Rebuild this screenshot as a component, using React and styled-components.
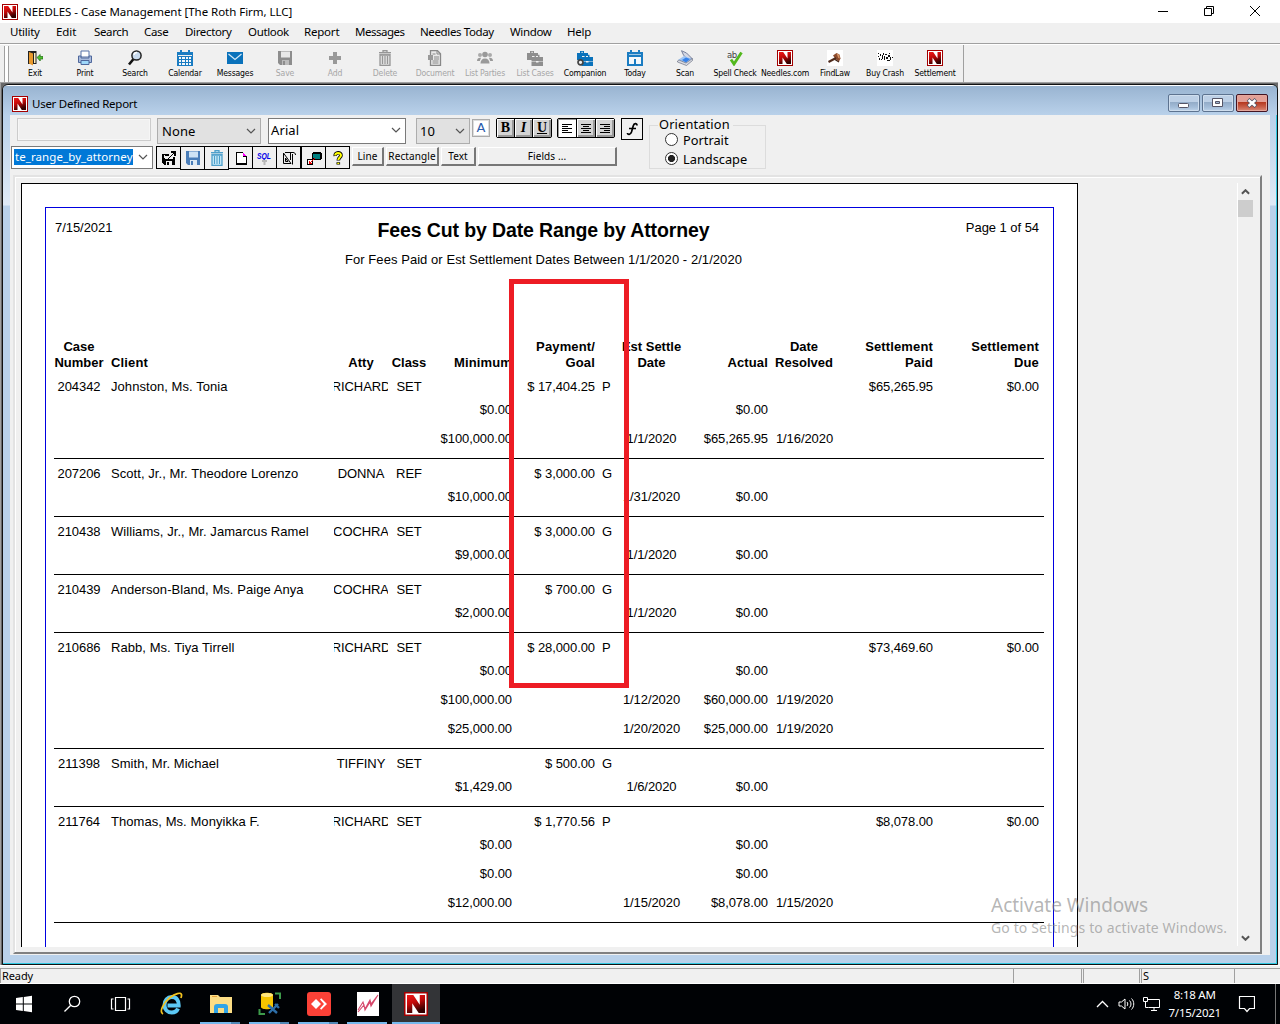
import React from "react";
import styled, { createGlobalStyle, css } from "styled-components";

const GlobalStyle = createGlobalStyle`
  * { box-sizing: border-box; }
  html, body { margin: 0; padding: 0; overflow: hidden; }
  body { font-family: "Noto Sans", "Open Sans", sans-serif; font-size: 11.5px; color: #000; }
  svg { display: block; flex: none; }
`;

const Desktop = styled.div`
  position: relative;
  width: 1280px;
  height: 1024px;
  display: flex;
  flex-direction: column;
  background: #f0f0f0;
  white-space: nowrap;
  overflow: hidden;
`;

/* ---------- application chrome ---------- */
const TitleBar = styled.header`
  height: 23px;
  flex: none;
  display: flex;
  align-items: center;
  padding-left: 2px;
  background: #fff;
  gap: 5px;
`;
const TitleText = styled.span`
  font-size: 11.5px;
  letter-spacing: ${(p) => p.$ls || "-0.04px"};
  line-height: 16px;
  flex: 1;
`;
const CaptionButtons = styled.div`
  display: flex;
  align-items: center;
  height: 20px;
  margin: -2px 2px 0 0;
`;
const CaptionButton = styled.div`
  width: 46px;
  display: flex;
  justify-content: center;
`;
const MenuBar = styled.nav`
  height: 21px;
  flex: none;
  display: flex;
  padding: 1px 0 0 10px;
  line-height: 16px;
  border-bottom: 1px solid #a0a0a0;
`;
const MenuItem = styled.span`
  width: ${(p) => p.$w}px;
  letter-spacing: ${(p) => p.$ls || -0.35}px;
`;
const Toolbar = styled.div`
  height: 38px;
  flex: none;
  display: flex;
  border-top: 1px solid #fff;
`;
const Grip = styled.div`
  width: 5px;
  height: 36px;
  margin: 1px 1px 0 4px;
  border: solid #a0a0a0;
  border-width: 0 1px;
  background: #fff;
`;
const ToolButtons = styled.div`
  display: flex;
  width: 954px;
  border-right: 1px solid #a0a0a0;
`;
const ToolButton = styled.div`
  width: 50px;
  flex: none;
  display: flex;
  flex-direction: column;
  align-items: center;
  padding-top: 5px;
  gap: 1px;
  color: ${(p) => (p.$off ? "#a6a6a6" : "#000")};
`;
const ToolLabel = styled.span`
  font: 8.6px/12px "DejaVu Sans Condensed", "DejaVu Sans", sans-serif;
  font-stretch: condensed;
  letter-spacing: -0.18px;
`;

/* ---------- child window ---------- */
const Workspace = styled.main`
  height: 883px;
  flex: none;
  padding: 0 0 1px 1px;
  margin-right: 2px;
  border-top: 1px solid #a0a0a0;
  background: #696969;
  border-left: 1px solid #a0a0a0;
`;
const Child = styled.section`
  height: 881px;
  margin-top: 1px;
  border: 1px solid #111;
  border-radius: 6px 6px 0 0;
  display: flex;
  flex-direction: column;
  overflow: hidden;
  background: #b9d1ea;
  box-shadow: inset -1px -1px 0 #2fc9e2, inset 0 1px 0 #fff, inset 1px 0 0 #e8f1fa;
`;
const ChildTitle = styled.div`
  height: 29px;
  flex: none;
  margin-top: 1px;
  display: flex;
  align-items: center;
  gap: 4px;
  padding: 6px 9px 0 9px;
  background: linear-gradient(#99b4d1, #b9d1ea);
`;
const ChildButtons = styled.div`
  display: flex;
  gap: 2px;
  height: 20px;
`;
const ChildButton = styled.div`
  width: 32px;
  height: 18px;
  border: 1px solid ${(p) => (p.$close ? "#431422" : "#5d7390")};
  border-radius: 2px;
  box-shadow: inset 0 0 0 1px ${(p) => (p.$close ? "#e5a79c" : "#cfdeee")};
  background: ${(p) =>
    p.$close
      ? "linear-gradient(#e3a097 0 45%, #b5381f 46%, #c9604a 75%, #d98b78)"
      : "linear-gradient(#bdd0e6 0 45%, #93acc8 46%, #a3bcd8 75%, #bdd3ea)"};
  display: flex;
  align-items: center;
  justify-content: center;
`;
const ChildBody = styled.div`
  height: 849px;
  flex: none;
  padding: 0 7px 9px 7px;
  background: linear-gradient(#b9d1ea 0, #dfeaf6 90px, #b9d1ea 91px);
  box-shadow: inset -1px -1px 0 #2fc9e2;
`;
const Form = styled.div`
  height: 840px;
  width: 1260px;
  background: #f0f0f0;
  display: flex;
  flex-direction: column;
`;

/* ---------- form toolbar ---------- */
const FormBar = styled.div`
  height: 60px;
  flex: none;
  display: flex;
`;
const FormRows = styled.div`
  width: 639px;
  flex: none;
`;
const FormRow = styled.div`
  height: ${(p) => p.$h}px;
  display: flex;
  align-items: flex-start;
  padding: ${(p) => p.$pad};
`;
const DisabledInput = styled.div`
  width: 134px;
  height: 23px;
  margin-right: 6px;
  border: 1px solid #ccc;
  box-shadow: inset 0 0 0 1px #f6f6f6;
`;
const Combo = styled.div`
  width: ${(p) => p.$w}px;
  height: ${(p) => p.$h || 26}px;
  margin-right: ${(p) => p.$mr || 0}px;
  display: flex;
  align-items: center;
  justify-content: space-between;
  padding: 0 4px ${(p) => (p.$gray ? 0 : 2)}px ${(p) => p.$pl || 4}px;
  font-size: 13px;
  letter-spacing: 0.1px;
  border: 1px solid ${(p) => (p.$gray ? "#adadad" : "#7a7a7a")};
  background: ${(p) => (p.$gray ? "#e1e1e1" : "#fff")};
`;
const Selection = styled.span`
  width: 119px;
  height: 16px;
  line-height: 15px;
  padding-left: 1px;
  overflow: hidden;
  font-size: 11.5px;
  letter-spacing: 0.08px;
  color: #fff;
  background: #0078d7;
`;
const FontColor = styled.div`
  width: 18px;
  height: 18px;
  margin: 1px 6px 0 0;
  border: 1px solid #aaa;
  background: #fff;
  box-shadow: inset 0 0 0 1px #ddd;
  color: #2a5cad;
  font: 13px/16px "DejaVu Sans", sans-serif;
  text-align: center;
`;
const ButtonGroup = styled.div`
  display: flex;
  height: 20px;
  margin-right: ${(p) => p.$mr}px;
  border: 1px solid #000;
  border-radius: 2px;
  background: #000;
  gap: 1px;
`;
const StyleButton = styled.div`
  width: ${(p) => p.$w}px;
  height: 18px;
  display: flex;
  align-items: center;
  justify-content: center;
  background: ${(p) => (p.$on ? "#fff" : "#d4d4d4")};
  box-shadow: ${(p) => (p.$on ? "inset 1px 1px 0 #999" : "inset 1px 1px 0 #fff, inset -2px -2px 0 #999")};
  font: bold 14px/16px "Liberation Serif", serif;
  ${(p) => p.$italic && css`font-style: italic;`}
  ${(p) => p.$under && css`text-decoration: underline;`}
`;
const FunctionButton = styled.div`
  width: 22px;
  height: 22px;
  border: 1px solid #000;
  display: flex;
  align-items: center;
  justify-content: center;
`;
const IconStrip = styled.div`
  display: flex;
  margin-right: 3px;
`;
const IconButton = styled.div`
  width: 25px;
  height: ${(p) => (p.$tall ? 24 : 23)}px;
  margin-right: ${(p) => (p.$gap ? 0 : -1)}px;
  border: 1px solid #000;
  display: flex;
  align-items: center;
  justify-content: center;
  background: #f0f0f0;
`;
const PushButton = styled.div`
  width: ${(p) => p.$w}px;
  height: 19px;
  margin: 1px 2px 0 0;
  font-size: 10px;
  line-height: 16px;
  text-align: center;
  border: 1px solid #fff;
  border-right: 2px solid #777;
  border-bottom: 2px solid #777;
  letter-spacing: 0.1px;
`;
const Orientation = styled.fieldset`
  width: 117px;
  height: 52px;
  margin: 2px 0 0;
  padding: 0 0 0 15px;
  min-width: 0;
  border: 1px solid #dcdcdc;
  font-size: 12.8px;
`;
const Legend = styled.legend`
  margin-left: -7px;
  padding: 0 3px 0 1px;
  line-height: 15px;
  height: 16px;
  letter-spacing: 0.15px;
`;
const RadioRow = styled.div`
  display: flex;
  align-items: center;
  height: 19px;
  gap: 5px;
  &:first-of-type { margin-top: -3px; }
`;
const Radio = styled.div`
  width: 13px;
  height: 13px;
  border: 1px solid #333;
  border-radius: 50%;
  background: ${(p) => (p.$on ? "radial-gradient(circle, #222 0 3.2px, #fff 3.9px)" : "#fff")};
`;

/* ---------- preview pane ---------- */
const Preview = styled.div`
  width: 1249px;
  height: 779px;
  margin-left: 3px;
  display: flex;
  justify-content: space-between;
  padding: 6px 7px 6px 6px;
  border: 2px solid;
  border-color: #e3e3e3 #808080 #808080 #e3e3e3;
  box-shadow: inset 1px 1px 0 #fff;
`;
const Page = styled.div`
  width: 1057px;
  height: 764px;
  padding: 23px 23px 0;
  border: 1px solid #000;
  border-bottom: 0;
  background: #fff;
`;
const Report = styled.article`
  width: 1009px;
  height: 740px;
  border: 1px solid #0000e0;
  border-bottom: 0;
  padding: 0 9px 0 8px;
  font: 13px/16px "Liberation Sans", Arial, sans-serif;
`;
const ReportTop = styled.div`
  height: 131px;
  display: grid;
  grid-template-columns: 150px 1fr 157px;
  padding: 11px 5px 0 1px;
`;
const ReportDate = styled.div`
  padding-top: 1px;
  letter-spacing: -0.05px;
`;
const PageNo = styled.div`
  padding-top: 1px;
  text-align: right;
  letter-spacing: -0.05px;
`;
const Heading = styled.div`
  display: flex;
  flex-direction: column;
  align-items: center;
`;
const ReportTitle = styled.h1`
  margin: 0;
  font: bold 19.5px/22px "Liberation Sans", Arial, sans-serif;
  letter-spacing: -0.13px;
`;
const Subtitle = styled.div`
  margin-top: 11px;
  letter-spacing: 0.06px;
`;
const Columns = styled.div`
  display: grid;
  grid-template-columns: 50px 230px 54px 42px 82px 83px 28px 57px 88px 72px 93px 106px;
`;
const HeaderRow = styled(Columns)`
  height: 33px;
  padding-bottom: 1px;
  align-items: end;
  font-weight: bold;
`;
const Cell = styled.div`
  text-align: ${(p) => p.$align || "right"};
  padding-left: ${(p) => p.$pl || 0}px;
  white-space: pre;
  letter-spacing: ${(p) => (p.$align === "left" ? 0.06 : -0.08)}px;
`;
const CenterCell = styled(Cell)`
  display: flex;
  justify-content: center;
  overflow: ${(p) => (p.$clip ? "hidden" : "visible")};
  text-align: center;
`;
const HeadCell = styled(CenterCell)`
  justify-content: ${(p) => p.$pos};
  text-align: ${(p) => (p.$pos === "flex-end" ? "right" : p.$pos === "center" ? "center" : "left")};
  letter-spacing: ${(p) => (p.$pos === "center" ? 0 : 0.14)}px;
`;
const Record = styled.div`
  width: 990px;
  padding: 3px 0 2px;
  border-bottom: 1px solid #000;
`;
const RecordLine = styled(Columns)`
  height: ${(p) => (p.$first ? 23 : 29)}px;
  line-height: 23px;
`;
const Scrollbar = styled.div`
  width: 16px;
  display: flex;
  flex-direction: column;
  align-items: center;
  border-left: 1px solid #fff;
`;
const ScrollArrow = styled.div`
  height: 17px;
  display: flex;
  align-items: center;
`;
const Thumb = styled.div`
  width: 15px;
  height: 17px;
  margin-bottom: auto;
  background: #cdcdcd;
`;

/* ---------- status and taskbar ---------- */
const StatusBar = styled.footer`
  height: 19px;
  flex: none;
  display: flex;
  padding-top: 2px;
  background: #f0f0f0;
  border-top: 1px solid #fff;
  border-bottom: 1px solid #fff;
`;
const StatusPane = styled.div`
  width: ${(p) => p.$w}px;
  height: 15px;
  padding-left: 1px;
  line-height: 14px;
  font-size: 11px;
  letter-spacing: -0.1px;
  background: #f0f0f0;
  border-top: 1px solid #a0a0a0;
  border-left: 1px solid #a0a0a0;
`;
const Taskbar = styled.div`
  height: 40px;
  flex: none;
  display: flex;
  background: #000205;
  color: #fff;
`;
const TaskItem = styled.div`
  width: ${(p) => p.$w || 49}px;
  height: 40px;
  display: flex;
  flex-direction: column;
  align-items: center;
  justify-content: space-between;
  padding-top: 8px;
  background: ${(p) => (p.$active ? "#333437" : "transparent")};
`;
const Underline = styled.div`
  width: ${(p) => p.$w || 40}px;
  height: 2px;
  margin-right: ${(p) => (p.$w ? 0 : 1)}px;
  background: ${(p) => (p.$multi ? "linear-gradient(90deg, #76b9ed 0 31px, #4f87b5 31px)" : "#76b9ed")};
`;
const Tray = styled.div`
  margin-left: auto;
  width: 186px;
  display: flex;
  align-items: center;
  gap: 8px;
`;
const Clock = styled.div`
  width: 60px;
  text-align: center;
  font-size: 11.5px;
  line-height: 18px;
  letter-spacing: -0.25px;
  padding-bottom: 1px;
`;
const ShowDesktop = styled.div`
  width: 5px;
  height: 40px;
  margin-left: 12px;
  border-left: 1px solid #777;
`;

/* ---------- overlays ---------- */
const Highlight = styled.div`
  position: absolute;
  left: 509px;
  top: 279px;
  width: 120px;
  height: 409px;
  border: 5px solid #ed1c24;
`;
const Watermark = styled.div`
  position: absolute;
  left: 991px;
  top: 892px;
  color: rgba(135, 135, 135, 0.62);
`;
const WatermarkTitle = styled.div`
  font-size: 19px;
  line-height: 26px;
`;
const WatermarkText = styled.div`
  font-size: 14px;
  line-height: 20px;
  letter-spacing: 0.12px;
`;

/* ---------- icons ---------- */
const NLogo = ({ size = 16 }) => (
  <svg width={size} height={size} viewBox="0 0 16 16">
    <defs>
      <linearGradient id="nred" x1="0" y1="0" x2="0.4" y2="1">
        <stop offset="0" stopColor="#f01818" />
        <stop offset="0.5" stopColor="#c00808" />
        <stop offset="1" stopColor="#300" />
      </linearGradient>
    </defs>
    <rect x=".5" y=".5" width="15" height="15" fill="#fff" stroke="#a40000" />
    <path d="M2 2h4.200l4.300 6.500V2H14v12H9.800L5.500 7.500V14H2z" fill="url(#nred)" />
  </svg>
);
const S = ({ children, size = 16, crisp }) => (
  <svg width={size} height={size} viewBox="0 0 16 16" fill="none" shapeRendering={crisp ? "crispEdges" : "auto"}>
    {children}
  </svg>
);
const Chevron = ({ color = "#555", flip, w = 10, sw = 1.2 }) => (
  <svg width={w} height="6" viewBox="0 0 10 6" fill="none">
    <path d={flip ? "M1 5l4-4 4 4" : "M1 1l4 4 4-4"} stroke={color} strokeWidth={sw} />
  </svg>
);
const Briefcases = ({ color, dot }) => (
  <S>
    <path d="M0 3h3V1h4v2h4v3H5v4H0z" fill={color} />
    <path d="M4.500 1.800h1.200V3H4.500z" fill="#f0f0f0" />
    <path d="M4.500 7h3V4.800h5V7H16v4H4.500z" fill={color} />
    <path d="M4.500 11.600H9v1h2.500v-1H16V16H4.500z" fill={color} />
    <path d="M9 6h2v1H9z" fill="#f0f0f0" />
    {dot && <circle cx="3.500" cy="12.300" r="2.500" fill="#eee" stroke="#444" strokeWidth="1.700" />}
  </S>
);
const DiskIcon = ({ a = "#8d8d8d", b = "#e8e8e8", c = "#bbb" }) => (
  <S>
    <path d="M1 1h14v14H3l-2-2z" fill={a} />
    <path d="M4 1.500h9v6H4z" fill={b} />
    <path d="M5 10h7v5H5z" fill={c} />
    <path d="M6 11h2v4H6z" fill={a} />
  </S>
);
const TrashIcon = ({ color, light }) => (
  <S>
    <path d="M6 2V.7h4V2M2 2.700h12M3 5h10v10.300H3z" stroke={color} strokeWidth="1.300" fill={light} />
    <path d="M2.500 4.300h11M5.500 6v8M8 6v8M10.500 6v8" stroke={color} strokeWidth="1.100" />
  </S>
);

const icons = {
  exit: (
    <S>
      <path d="M1 1h8.500v13H1z" fill="#222" />
      <path d="M2 2l4 1.500V15.500L2 13.500z" fill="#e8992c" />
      <path d="M7 3h1.500v10H7z" fill="#fff0c0" />
      <path d="M10 7.500l3.200-3v2H16v2.500h-2.800v2z" fill="#4fc02f" stroke="#1d6b10" strokeWidth=".7" />
    </S>
  ),
  print: (
    <S>
      <path d="M4 1h8v6H4z" fill="#fff" stroke="#5470a8" />
      <path d="M1.500 6H4v2h8V6h2.500v6.500h-13z" fill="#a9bbdc" stroke="#4f689c" />
      <path d="M4 10.500h8v4H4z" fill="#9fd8fa" stroke="#4f689c" />
    </S>
  ),
  search: (
    <S>
      <path d="M6.500 9L2 14.500" stroke="#111" strokeWidth="2.600" />
      <circle cx="9.500" cy="5.500" r="4.600" fill="#c9dbee" stroke="#222" strokeWidth="1.500" />
      <path d="M7 5a3 3 0 013-2.500" stroke="#fff" strokeWidth="1.400" />
    </S>
  ),
  calendar: (
    <S crisp>
      <path d="M0 2h16v14H0z" fill="#1a7cc2" />
      <path d="M3 0h2v3H3zM11 0h2v3h-2z" fill="#1a7cc2" />
      <path d="M1 5h14v1H1z" fill="#f0f0f0" />
      <path d="M2 7h2v2H2zM5 7h3v2H5zM9 7h2v2H9zM12 7h2v2h-2zM2 10h2v2H2zM5 10h3v2H5zM9 10h2v2H9zM12 10h2v2h-2zM2 13h2v2H2zM5 13h3v2H5zM9 13h2v2H9zM12 13h2v2h-2z" fill="#f4f8fb" />
    </S>
  ),
  messages: (
    <S>
      <path d="M0 2h16v12H0z" fill="#0a72bb" />
      <path d="M1.500 4L8 9.500 14.500 4" stroke="#d5e9f7" strokeWidth="1.200" />
    </S>
  ),
  save: <DiskIcon />,
  add: (
    <S>
      <path d="M6 2h4v4h4v4h-4v4H6v-4H2V6h4z" fill="#999" />
    </S>
  ),
  delete: <TrashIcon color="#969696" light="#dedede" />,
  document: (
    <S>
      <path d="M3.500.7h7l3 3v11.600h-10z" stroke="#888" strokeWidth="1.300" fill="#e8e8e8" />
      <path d="M10 1v3h3M5.500 4h3M7 7h5M7 9h5M5.500 11h6M5.500 13h6" stroke="#888" />
      <path d="M1 5h5v5H1z" fill="#999" />
    </S>
  ),
  parties: (
    <S>
      <circle cx="8" cy="4.500" r="2.800" fill="#999" />
      <circle cx="3" cy="5" r="2" fill="#aaa" />
      <circle cx="13" cy="5" r="2" fill="#aaa" />
      <path d="M3.500 13.500c0-3 1.500-5 4.500-5s4.500 2 4.500 5zM0 11c0-2 1-3.500 4-3.200L2.800 11zM16 11c0-2-1-3.500-4-3.200l1.200 3.200z" fill="#999" />
    </S>
  ),
  cases: <Briefcases color="#8e8e8e" />,
  companion: <Briefcases color="#0a72bb" dot />,
  today: (
    <S crisp>
      <path d="M0 2h16v14H0z" fill="#1a7cc2" />
      <path d="M3 0h2v3H3zM11 0h2v3h-2z" fill="#1a7cc2" />
      <path d="M2 4h12v1H2z" fill="#9cc7e6" />
      <path d="M2 7h12v7H2z" fill="#f4f8fb" />
      <path d="M7 9h2v5H7z" fill="#1a7cc2" />
    </S>
  ),
  scan: (
    <S>
      <path d="M4.500 .7l5 2.300L15 8.500l-4 1.500L6.500 5z" fill="#d3d7e4" stroke="#77809c" />
      <path d="M1 10l6-4 8 3-5.500 4.500z" fill="#9cc4f5" />
      <path d="M5 10l4-2.500 4 1.500-4 3.500z" fill="#3481ea" />
      <path d="M0.500 11l1.500-1 7 3 6.500-4.500v2L9.500 15.500.5 12z" fill="#d8dae2" stroke="#6c7184" strokeWidth=".7" />
    </S>
  ),
  spell: (
    <svg width="18" height="16" viewBox="0 0 18 16">
      <text x="1" y="7.500" fontSize="8.500" fontFamily="DejaVu Sans" fill="#444" letterSpacing="-.5">ab</text>
      <path d="M5 9.500l3 4.500 7.500-11.500" fill="none" stroke="#52b81d" strokeWidth="2.800" />
    </svg>
  ),
  needles: <NLogo />,
  findlaw: (
    <S>
      <path d="M0 0h16v16H0z" fill="#fff" />
      <path d="M6 5.500L9.500 3l3 1.500 1 4-1.500 3-3.500-2.500z" fill="#8b4a2c" />
      <path d="M9.500 3.500l2.500 1 .8 4-1.500-.5z" fill="#d79566" />
      <path d="M9 8L1.500 12" stroke="#4f2b1c" strokeWidth="2.200" />
      <path d="M8 9.500l4 2.500" stroke="#3a1e12" strokeWidth="1.200" />
    </S>
  ),
  crash: (
    <S crisp>
      <path d="M0 0h16v16H0z" fill="#fff" />
      <path d="M1 3h1v1H1zM3 4h1v2H3zM1 6h1v1H1zM2 8h1v2H2zM4 9h1v1H4zM6 3h1v2H6zM5 5h1v4H5zM8 4h2v1H8zM7 6h1v4H7zM9 7h2v2H9zM11 5h2v2h-2zM10 10h3v1h-3zM13 7h1v3h-1zM15 7h1v1h-1zM12 3h1v1h-1z" fill="#111" />
    </S>
  ),
};

const tools = [
  ["Exit", "exit"], ["Print", "print"], ["Search", "search"], ["Calendar", "calendar"],
  ["Messages", "messages"], ["Save", "save", 1], ["Add", "add", 1], ["Delete", "delete", 1],
  ["Document", "document", 1], ["List Parties", "parties", 1], ["List Cases", "cases", 1],
  ["Companion", "companion"], ["Today", "today"], ["Scan", "scan"], ["Spell Check", "spell"],
  ["Needles.com", "needles"], ["FindLaw", "findlaw"], ["Buy Crash", "crash"], ["Settlement", "needles"],
];

const menus = [
  ["Utility", 46, -0.25], ["Edit", 38, -0.05], ["Search", 50], ["Case", 41], ["Directory", 63], ["Outlook", 56],
  ["Report", 51, -0.2], ["Messages", 65, -0.5], ["Needles Today", 90, -0.37], ["Window", 57], ["Help", 40, -0.2],
];

const AlignLines = ({ kind }) => {
  const widths = [10, 6, 10, 6, 10];
  return (
    <svg width="12" height="10" viewBox="0 0 12 10" shapeRendering="crispEdges">
      {widths.map((w, i) => (
        <rect key={i} y={i * 2 + 1} height="1" width={w} x={kind === "left" ? 1 : kind === "right" ? 11 - w : 6 - w / 2} fill="#000" />
      ))}
    </svg>
  );
};

const stripIcons = [
  [
    <S crisp key="a">
      <path d="M1 4h7v2H4v3h8V7h2v8H3l-2-2z" fill="#000" />
      <path d="M3 5h1v3H3zM5 11h6v4H5z" fill="#f0f0f0" />
      <path d="M6 12h2v3H6z" fill="#000" />
      <path d="M7 8h1V7h1V6h1V5h1V4h1V3h-2V1h5v5h-2V4h-1v1h-1v1h-1v1H9v1H8v1H7z" fill="#000" />
    </S>,
  ],
  [<DiskIcon key="b" a="#4a7db8" b="#cfe3f5" c="#dde9f3" />, true],
  [<TrashIcon key="c" color="#4e9fca" light="#c7e8f7" />, true],
  [
    <S crisp key="d">
      <path d="M3 2h7v1h1v1h1v1h1v1h1v9H3z" fill="#000" />
      <path d="M4 3h6v4h3v6H4z" fill="#fff" />
      <path d="M10 3h1v1h1v1h1v1h-3z" fill="#f0f" />
    </S>,
  ],
  [
    <svg key="e" width="17" height="16" viewBox="0 0 17 16">
      <text x="1" y="9" fontSize="8.500" fontWeight="bold" fontStyle="italic" fontFamily="Liberation Sans" fill="#0000e8" textLength="14" lengthAdjust="spacingAndGlyphs">SQL</text>
      <path d="M6 11h5M8.500 12v3" stroke="#bbb" strokeWidth="2" />
    </svg>,
  ],
  [
    <S key="f">
      <path d="M2.500 3v10.500H10zM4.500 8v3.500H7z" stroke="#000" />
      <path d="M4 2.500h8c1.500 0 2.500.8 2.500 2.500M9.500 3v7M11.500 4v10.500" stroke="#000" />
    </S>,
    false,
    true,
  ],
  [
    <S crisp key="g">
      <path d="M6 3h1V2h8v1h1v6h-1v1H8V9H6z" fill="#000" />
      <path d="M7 4h7v5H8V8H7z" fill="#008080" />
      <path d="M1 9h6v6H1z" fill="#000" />
      <path d="M2 10h4v4H2z" fill="#fff" />
      <path d="M3 11h1v1h1v-1h1v-1h1V9h1V8h1v1H8v1H7v1H6v1H5v1h1v1H3z" fill="#e00" />
    </S>,
  ],
  [
    <S key="h">
      <path d="M5.200 6C4.800 1.800 11.300 1.800 11 5.500c-.200 2-2.700 2-2.700 5M8.300 12.200v2.300" stroke="#000" strokeWidth="3.600" />
      <path d="M5.200 5.500C5.200 2 11 2 11 5.500c-.200 2-2.700 2-2.700 4.500M8.300 12.700v1.300" stroke="#ff0" strokeWidth="2" />
    </S>,
  ],
];

/* a record: number, client, attorney, class, payment, flag, paid, due, then detail lines */
const records = [
  { no: "204342", client: "Johnston, Ms. Tonia", atty: "RICHARD", cls: "SET", pay: "$ 17,404.25", flag: "P", paid: "$65,265.95", due: "$0.00",
    lines: [["$0.00", "", "$0.00", ""], ["$100,000.00", "1/1/2020", "$65,265.95", "1/16/2020"]] },
  { no: "207206", client: "Scott, Jr., Mr. Theodore Lorenzo", atty: "DONNA", cls: "REF", pay: "$ 3,000.00", flag: "G",
    lines: [["$10,000.00", "1/31/2020", "$0.00", ""]] },
  { no: "210438", client: "Williams, Jr., Mr. Jamarcus Ramel", atty: "COCHRA", cls: "SET", pay: "$ 3,000.00", flag: "G",
    lines: [["$9,000.00", "1/1/2020", "$0.00", ""]] },
  { no: "210439", client: "Anderson-Bland, Ms. Paige Anya", atty: "COCHRA", cls: "SET", pay: "$ 700.00", flag: "G",
    lines: [["$2,000.00", "1/1/2020", "$0.00", ""]] },
  { no: "210686", client: "Rabb, Ms. Tiya Tirrell", atty: "RICHARD", cls: "SET", pay: "$ 28,000.00", flag: "P", paid: "$73,469.60", due: "$0.00",
    lines: [["$0.00", "", "$0.00", ""], ["$100,000.00", "1/12/2020", "$60,000.00", "1/19/2020"], ["$25,000.00", "1/20/2020", "$25,000.00", "1/19/2020"]] },
  { no: "211398", client: "Smith, Mr. Michael", atty: "TIFFINY", cls: "SET", pay: "$ 500.00", flag: "G",
    lines: [["$1,429.00", "1/6/2020", "$0.00", ""]] },
  { no: "211764", client: "Thomas, Ms. Monyikka F.", atty: "RICHARD", cls: "SET", pay: "$ 1,770.56", flag: "P", paid: "$8,078.00", due: "$0.00",
    lines: [["$0.00", "", "$0.00", ""], ["$0.00", "", "$0.00", ""], ["$12,000.00", "1/15/2020", "$8,078.00", "1/15/2020"]] },
];

const ReportRecord = ({ r }) => (
  <Record>
    <RecordLine $first>
      <CenterCell>{r.no}</CenterCell>
      <Cell $align="left" $pl={7}>{r.client}</Cell>
      <CenterCell $clip>{r.atty}</CenterCell>
      <CenterCell>{r.cls}</CenterCell>
      <Cell />
      <Cell>{r.pay}</Cell>
      <Cell $align="left" $pl={7}>{r.flag}</Cell>
      <Cell /><Cell /><Cell />
      <Cell>{r.paid}</Cell>
      <Cell>{r.due}</Cell>
    </RecordLine>
    {r.lines.map(([min, est, actual, resolved], i) => (
      <RecordLine key={i}>
        <Cell /><Cell /><Cell /><Cell />
        <Cell>{min}</Cell>
        <Cell /><Cell />
        <CenterCell>{est}</CenterCell>
        <Cell>{actual}</Cell>
        <CenterCell $pl={1}>{resolved}</CenterCell>
      </RecordLine>
    ))}
  </Record>
);

const headers = [
  ["Case\nNumber", "center"], ["Client", "flex-start", 7], ["Atty", "center"], ["Class", "center"],
  ["Minimum", "flex-end"], ["Payment/\nGoal", "flex-end"], ["", "center"], ["Est Settle\nDate", "center"],
  ["Actual", "flex-end"], ["Date\nResolved", "center"], ["Settlement\nPaid", "flex-end"], ["Settlement\nDue", "flex-end"],
];

const TaskIcon = ({ children }) => <svg width="24" height="24" viewBox="0 0 24 24" fill="none">{children}</svg>;

export default function App() {
  return (
    <Desktop>
      <GlobalStyle />
      <TitleBar>
        <NLogo />
        <TitleText>NEEDLES - Case Management [The Roth Firm, LLC]</TitleText>
        <CaptionButtons>
          <CaptionButton><svg width="10" height="10" viewBox="0 0 10 10" stroke="#000"><path d="M0 5.500h10" /></svg></CaptionButton>
          <CaptionButton>
            <svg width="10" height="10" viewBox="0 0 10 10" fill="none" stroke="#000"><path d="M.5 2.500h7v7h-7zM2.500 2V.5h7v7H8" /></svg>
          </CaptionButton>
          <CaptionButton>
            <svg width="10" height="10" viewBox="0 0 10 10" stroke="#000"><path d="M0 0l10 10M10 0L0 10" /></svg>
          </CaptionButton>
        </CaptionButtons>
      </TitleBar>
      <MenuBar>{menus.map(([t, w, ls]) => <MenuItem key={t} $w={w} $ls={ls}>{t}</MenuItem>)}</MenuBar>
      <Toolbar>
        <Grip />
        <ToolButtons>
          {tools.map(([label, icon, off]) => (
            <ToolButton key={label} $off={off}>
              {icons[icon]}
              <ToolLabel>{label}</ToolLabel>
            </ToolButton>
          ))}
        </ToolButtons>
      </Toolbar>

      <Workspace>
        <Child>
          <ChildTitle>
            <NLogo />
            <TitleText $ls="-0.26px">User Defined Report</TitleText>
            <ChildButtons>
              <ChildButton><svg width="12" height="12" viewBox="0 0 12 12"><rect x=".5" y="6.500" width="10" height="4" rx="1" fill="#fff" stroke="#556" /></svg></ChildButton>
              <ChildButton><svg width="12" height="12" viewBox="0 0 12 12"><path d="M.5 1.500h10v8H.5z" fill="#fff" stroke="#556" /><path d="M3.500 4.500h4v2h-4z" fill="#9db5d0" stroke="#556" /></svg></ChildButton>
              <ChildButton $close><svg width="12" height="10" viewBox="0 0 12 10"><path d="M2 1.500l8 7M10 1.500l-8 7" stroke="#556" strokeWidth="4" /><path d="M2.500 2l7 6M9.500 2l-7 6" stroke="#fff" strokeWidth="2.400" /></svg></ChildButton>
            </ChildButtons>
          </ChildTitle>
          <ChildBody>
            <Form>
              <FormBar>
                <FormRows>
                  <FormRow $h={31} $pad="3px 0 0 7px">
                    <DisabledInput />
                    <Combo $w={104} $gray $mr={7}>None<Chevron /></Combo>
                    <Combo $w={138} $mr={10} $pl={2}>Arial<Chevron /></Combo>
                    <Combo $w={54} $gray $mr={2} $pl={3}>10<Chevron /></Combo>
                    <FontColor>A</FontColor>
                    <ButtonGroup $mr={5}>
                      <StyleButton $w={17}>B</StyleButton>
                      <StyleButton $w={17} $italic>I</StyleButton>
                      <StyleButton $w={18} $under>U</StyleButton>
                    </ButtonGroup>
                    <ButtonGroup $mr={6}>
                      <StyleButton $w={18} $on><AlignLines kind="left" /></StyleButton>
                      <StyleButton $w={18}><AlignLines kind="center" /></StyleButton>
                      <StyleButton $w={18}><AlignLines kind="right" /></StyleButton>
                    </ButtonGroup>
                    <FunctionButton>
                      <svg width="14" height="14" viewBox="0 0 14 14" fill="none" stroke="#000">
                        <path d="M12 3.500c0-2.500-3-2.500-3.800.5L6.500 10c-1 3-4 3-4 1" strokeWidth="1.700" /><path d="M4 6.500h7" strokeWidth="1.300" />
                      </svg>
                    </FunctionButton>
                  </FormRow>
                  <FormRow $h={29} $pad="0 0 0 1px">
                    <Combo $w={142} $h={23} $mr={3} $pl={2}><Selection>te_range_by_attorney</Selection><Chevron /></Combo>
                    <IconStrip>
                      {stripIcons.map(([icon, tall, gap], i) => <IconButton key={i} $tall={tall} $gap={gap}>{icon}</IconButton>)}
                    </IconStrip>
                    <PushButton $w={32}>Line</PushButton>
                    <PushButton $w={53}>Rectangle</PushButton>
                    <PushButton $w={35}>Text</PushButton>
                    <PushButton $w={139}>Fields ...</PushButton>
                  </FormRow>
                </FormRows>
                <Orientation>
                  <Legend>Orientation</Legend>
                  <RadioRow><Radio />Portrait</RadioRow>
                  <RadioRow><Radio $on />Landscape</RadioRow>
                </Orientation>
              </FormBar>
              <Preview>
                <Page>
                  <Report>
                    <ReportTop>
                      <ReportDate>7/15/2021</ReportDate>
                      <Heading>
                        <ReportTitle>Fees Cut by Date Range by Attorney</ReportTitle>
                        <Subtitle>For Fees Paid or Est Settlement Dates Between 1/1/2020 - 2/1/2020</Subtitle>
                      </Heading>
                      <PageNo>Page 1 of 54</PageNo>
                    </ReportTop>
                    <HeaderRow>
                      {headers.map(([t, pos, pl], i) => <HeadCell key={i} $pos={pos} $pl={pl}>{t}</HeadCell>)}
                    </HeaderRow>
                    {records.map((r) => <ReportRecord key={r.no} r={r} />)}
                  </Report>
                </Page>
                <Scrollbar>
                  <ScrollArrow><Chevron flip w={9} sw={2.2} /></ScrollArrow>
                  <Thumb />
                  <ScrollArrow><Chevron w={9} sw={2.2} /></ScrollArrow>
                </Scrollbar>
              </Preview>
            </Form>
          </ChildBody>
        </Child>
      </Workspace>

      <StatusBar>
        <StatusPane $w={1014}>Ready</StatusPane>
        <StatusPane $w={68} />
        <StatusPane $w={1} />
        <StatusPane $w={56} />
        <StatusPane $w={2} />
        <StatusPane $w={93}>S</StatusPane>
        <StatusPane $w={46} />
      </StatusBar>
      <Taskbar>
        <TaskItem $w={48}>
          <TaskIcon><path d="M4 6l6.800-1v6.500H4zM11.800 4.900L20 3.800v7.700h-8.200zM4 12.500h6.800V19L4 18zM11.800 12.500H20v7.700L11.800 19z" fill="#fff" /></TaskIcon>
        </TaskItem>
        <TaskItem $w={48}>
          <TaskIcon><circle cx="14.500" cy="9.500" r="5.200" stroke="#fff" strokeWidth="1.300" /><path d="M10.800 13.200L4.500 19.500" stroke="#fff" strokeWidth="1.300" /></TaskIcon>
        </TaskItem>
        <TaskItem $w={50}>
          <TaskIcon><path d="M6.500 5.500h10v13h-10zM4.500 7H2.500v10h2M18.500 7h2v10h-2" stroke="#fff" strokeWidth="1.200" /></TaskIcon>
        </TaskItem>
        <TaskItem $w={50}>
          <TaskIcon>
            <path d="M19 16.500c-1 2.500-3.500 4-6.300 4C8.500 20.500 5.500 17.500 5.500 13S8.500 5 12.700 5c4.500 0 7.300 3 7 8.500H8.500" stroke="#5cc8f5" strokeWidth="4" />
            <path d="M4 22c-4-2 0-11 7-16.500C16 1.500 22 0 22.500 2.500c.200 1 0 2-.600 3.500" stroke="#f3c320" strokeWidth="1.700" />
          </TaskIcon>
        </TaskItem>
        <TaskItem>
          <TaskIcon>
            <path d="M1 3h8l2 2h12v16H1z" fill="#fbdd85" /><path d="M3 4h5v1H3z" fill="#e8a33d" />
            <path d="M5 21v-6c0-2 1-3 3-3h8c2 0 3 1 3 3v6h-4v-5H9v5z" fill="#2fa4e7" />
          </TaskIcon>
          <Underline $multi />
        </TaskItem>
        <TaskItem>
          <TaskIcon>
            <path d="M3 3c0-3 12-3 12 0v12c0 3-12 3-12 0z" fill="#f5c400" /><ellipse cx="9" cy="3" rx="6" ry="2" fill="#ffe680" />
            <path d="M17 1.500h5V7M1.500 17v5H7" stroke="#3d9a4a" strokeWidth="2" />
            <path d="M10 13l9 8M20 12l-9 9M17 12l4 4" stroke="#2d6ea8" strokeWidth="2.400" />
          </TaskIcon>
          <Underline $multi />
        </TaskItem>
        <TaskItem>
          <TaskIcon><rect width="24" height="24" rx="3" fill="#fb4137" /><path d="M9 7l5 5-5 5-5-5z" fill="#fff" /><path d="M13 7.500l1.200-1.200L20 12l-5.800 5.700L13 16.500l4-4.500z" fill="#fff" /></TaskIcon>
          <Underline $multi />
        </TaskItem>
        <TaskItem>
          <TaskIcon><path d="M1 0h22v24H1z" fill="#fff" /><path d="M2 18l5-8 2 7 5-9 1 4L22 3M2 20l6-7 1 5 5-8 1 4 7-11" stroke="#d6476b" strokeWidth="1.100" /></TaskIcon>
          <Underline />
        </TaskItem>
        <TaskItem $w={48} $active>
          <NLogo size={24} />
          <Underline $w={48} />
        </TaskItem>
        <Tray>
          <svg width="15" height="8" viewBox="0 0 15 8" fill="none" stroke="#fff"><path d="M3 7l5.500-5.500L14 7" strokeWidth="1.300" /></svg>
          <svg width="18" height="14" viewBox="0 0 18 14" fill="none" stroke="#fff"><path d="M2 5h2.500L8 2v10L4.500 9H2zM10 5c1 1 1 3 0 4M12.500 3.500c2 2 2 5 0 7M14.500 1.500c3 3 3 8 0 11" /></svg>
          <svg width="17" height="14" viewBox="0 0 17 14" fill="none" stroke="#fff"><path d="M5 2.500h11.500v8H5.500M8 13.500h6M11 10.500v3M.5.500h4v4h-4zM2.500 4.500v6h3" /></svg>
          <Clock>8:18 AM<br />7/15/2021</Clock>
          <svg width="26" height="18" viewBox="0 0 26 18" fill="none" stroke="#fff"><path d="M10.500 1.500h15v12h-5l-2.500 3-2.500-3h-5z" strokeWidth="1.200" /></svg>
          <ShowDesktop />
        </Tray>
      </Taskbar>

      <Highlight />
      <Watermark>
        <WatermarkTitle>Activate Windows</WatermarkTitle>
        <WatermarkText>Go to Settings to activate Windows.</WatermarkText>
      </Watermark>
    </Desktop>
  );
}
